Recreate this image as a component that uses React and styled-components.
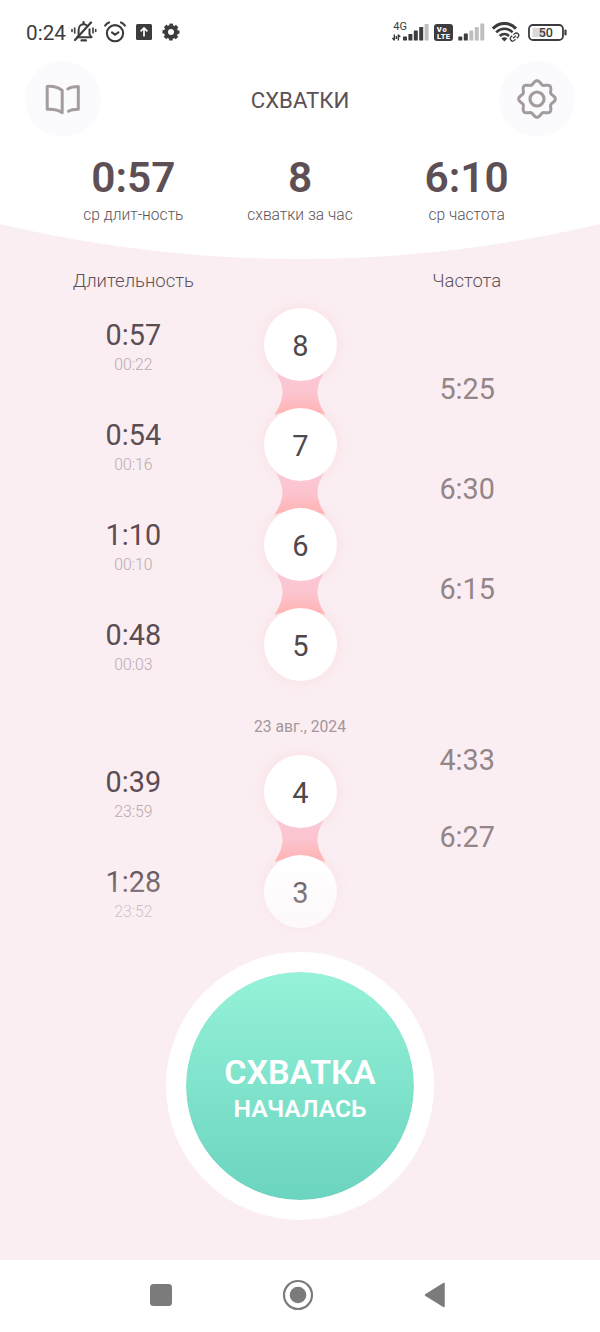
import React from "react";
import styled, { createGlobalStyle } from "styled-components";

const GlobalStyle = createGlobalStyle`
  * { box-sizing: border-box; }
  body { margin: 0; background: #fff; font-family: Roboto, "Noto Sans", sans-serif; }
`;

const Screen = styled.div`
  width: 600px;
  height: 1332px;
  display: flex;
  flex-direction: column;
  overflow: hidden;
  background: #faeef2;
`;

const Top = styled.header`
  height: 259px;
  flex: none;
  background: radial-gradient(circle at 50% -1044px, #fff 1302.5px, transparent 1303.5px);
`;

const StatusBar = styled.div`
  height: 60px;
  padding: 4px 33px 0 26px;
  display: flex;
  align-items: center;
  justify-content: space-between;
  color: #3c3c3e;
`;

const StatusGroup = styled.div`
  display: flex;
  align-items: center;
  svg { display: block; flex: none; }
`;

const Clock = styled.span`
  width: 45px;
  font-size: 20.7px;
  line-height: 24px;
  padding-top: 2px;
`;

const Spacer = styled.span`
  width: ${(p) => p.$w}px;
`;

const TitleBar = styled.div`
  height: 77px;
  padding: 0 25px;
  display: flex;
  align-items: center;
  justify-content: space-between;
`;

const RoundButton = styled.button`
  width: 76px;
  height: 76px;
  padding: 0;
  border: 0;
  border-radius: 50%;
  background: #fbfbfd;
  display: flex;
  align-items: center;
  justify-content: center;
`;

const Title = styled.h1`
  margin: 3px 0 0;
  font-size: 22.2px;
  font-weight: 400;
  color: #5d5054;
`;

const Columns = styled.div`
  display: grid;
  grid-template-columns: repeat(3, 1fr);
  padding: 0 50px;
  text-align: center;
`;

const Stats = styled(Columns)`
  padding-top: 16px;
`;

const StatValue = styled.div`
  font-size: 42.4px;
  font-weight: 600;
  line-height: 50px;
  color: #5d4f54;
`;

const StatLabel = styled.div`
  margin-top: 2px;
  font-size: 15.6px;
  font-weight: 300;
  line-height: 20px;
  color: #5c5457;
`;

const Main = styled.main`
  position: relative;
  height: 1001px;
  flex: none;
`;

const Headings = styled(Columns)`
  height: 35px;
  padding-top: 9px;
  font-size: 18.5px;
  font-weight: 300;
  line-height: 27px;
  color: #5d5256;
`;

const Durations = styled.div`
  display: flex;
  flex-direction: column;
`;

const DurationItem = styled.div`
  height: 100px;
  padding-top: 24px;
`;

const Duration = styled.div`
  font-size: 28.8px;
  line-height: 34px;
  color: #5b4d52;
`;

const StartTime = styled.div`
  margin-top: 3px;
  font-size: 15.8px;
  font-weight: 300;
  line-height: 20px;
  color: #b9abb0;
`;

const Beads = styled.div`
  display: flex;
  flex-direction: column;
  align-items: center;
  padding: 13.5px 0 0 1px;
`;

const Bead = styled.div`
  position: relative;
  width: 73px;
  height: 73px;
  flex: none;
  border-radius: 50%;
  box-shadow: 0 0 13px 1px rgba(253, 214, 214, 0.6);
`;

const BeadFace = styled.div`
  position: relative;
  z-index: 2;
  height: 100%;
  border-radius: 50%;
  background: #fff;
  font-size: 29px;
  line-height: 76px;
  color: #4f494b;
`;

const Link = styled.svg`
  display: block;
  flex: none;
  margin: -7.5px 0 -8.5px;
  position: relative;
  z-index: 1;
`;

const Intervals = styled.div`
  padding: ${(p) => p.$offset}px 0 0 1px;
  display: flex;
  flex-direction: column;
  gap: ${(p) => p.$gap}px;
  font-size: 28.8px;
  line-height: 37px;
  color: #948589;
`;

const DateLabel = styled.div`
  height: 47px;
  padding-top: 23px;
  text-align: center;
  font-size: 15.7px;
  line-height: 20px;
  color: #a59699;
`;

const ActionArea = styled.div`
  position: absolute;
  z-index: 3;
  left: 0;
  right: 0;
  top: 600px;
  bottom: 0;
  padding-top: 93px;
  display: flex;
  justify-content: center;
  align-items: flex-start;
  background: linear-gradient(rgba(251, 240, 244, 0) 5px, rgba(251, 240, 244, 0.28) 35px, rgba(251, 240, 244, 0.36) 68px, #faeef2 150px);
`;

const StartButton = styled.button`
  width: 268px;
  height: 268px;
  padding: 4px 0 0;
  border: 20px solid #fff;
  border-radius: 50%;
  background: linear-gradient(#95f2d8, #6bd4bf) padding-box;
  color: #fff;
  font-family: inherit;
  display: flex;
  flex-direction: column;
  align-items: center;
  justify-content: center;
`;

const ActionName = styled.span`
  font-size: 34px;
  font-weight: 600;
  line-height: 40px;
`;

const ActionState = styled.span`
  font-size: 24.7px;
  font-weight: 600;
  line-height: 33px;
`;

const NavBar = styled.nav`
  flex: 1;
  padding: 0 154px 2px 149px;
  background: #fff;
  display: flex;
  align-items: center;
  justify-content: space-between;
`;

const BellOffIcon = () => (
  <svg width="26" height="22" viewBox="0 0 26 22" fill="none" stroke="currentColor" strokeWidth="2" strokeLinecap="round">
    <path d="M6 16.2h14.5M7.6 15V9.2C7.6 5.8 9.6 3.2 12.6 3.2c1.6 0 2.6.5 3.5 1.5M18.5 8.2v5.3l2 2.5" />
    <path d="M12.6 1.2v1.5M10.5 19.4h4.5" strokeWidth="2.2" />
    <path d="M4 19 20 1.5" strokeWidth="2.2" />
    <path d="M3.7 7v5M1 8.5v2M22 7v5M24.7 8.5v2" strokeWidth="1.6" />
  </svg>
);

const AlarmIcon = () => (
  <svg width="22" height="22" viewBox="0 0 22 22" fill="none" stroke="currentColor" strokeWidth="2.1" strokeLinecap="round">
    <circle cx="11" cy="12.2" r="8.1" />
    <path d="m8 11.4 3 2.4 3.4-2.4" />
    <path d="M1.2 4.6c.8-1.5 2-2.6 3.8-3.2M20.8 4.6c-.8-1.5-2-2.6-3.8-3.2" />
  </svg>
);

const UploadIcon = () => (
  <svg width="16" height="16" viewBox="0 0 16 16">
    <rect width="16" height="16" rx="1.5" fill="currentColor" />
    <path d="M8 12.4V4.2M4.6 7.4 8 4l3.4 3.4" fill="none" stroke="#fff" strokeWidth="1.7" />
  </svg>
);

const CogIcon = () => (
  <svg width="18" height="18" viewBox="0 0 18 18" fill="none" stroke="currentColor">
    <circle cx="9" cy="9" r="5" strokeWidth="4" />
    <circle cx="9" cy="9" r="7.2" strokeWidth="2.6" strokeDasharray="3.5 2.155" strokeDashoffset="1.75" />
  </svg>
);

const Bars = ({ active }) => (
  <svg width="27" height="18" viewBox="0 0 27 18" fill="currentColor">
    {[4, 7, 10, 13.5, 17].map((h, i) => (
      <rect key={h} x={0.3 + i * 5.5} y={17.5 - h} width="4" height={h} rx=".6" opacity={i < active ? 1 : 0.33} />
    ))}
  </svg>
);

const MobileSignalIcon = () => (
  <svg width="37" height="22" viewBox="0 0 37 22" fill="currentColor">
    <text x="1.3" y="8.8" fontSize="11" fontFamily="Roboto, sans-serif">4G</text>
    <path d="M2.3 13.5v6M6.3 19.5v-6M.4 17l1.9 2.3M8.2 16l-1.9-2.3M4.3 15v3" fill="none" stroke="currentColor" strokeWidth="1.4" />
    {[4, 6.5, 10, 13.5, 16.5].map((h, i) => (
      <rect key={h} x={11 + i * 5.4} y={19.5 - h} width="4" height={h} rx=".6" opacity={i < 4 ? 1 : 0.33} />
    ))}
  </svg>
);

const VolteIcon = () => (
  <svg width="19" height="17" viewBox="0 0 19 17" fontFamily="Roboto, sans-serif" fontWeight="900">
    <rect width="19" height="17" rx="3" fill="currentColor" />
    <text x="2.8" y="7.6" fontSize="7.5" fill="#fff" textLength="10">Vo</text>
    <text x="3" y="14.6" fontSize="7.5" fill="#fff" textLength="13">LTE</text>
  </svg>
);

const WifiIcon = () => (
  <svg width="28" height="20" viewBox="0 0 28 20" fill="none" stroke="currentColor">
    <path d="M.8 6.6C7.5-.3 17.3-.3 24 6.6" strokeWidth="3" />
    <path d="M4.2 10.3c4.7-4.7 11.8-4.7 16.4 0" strokeWidth="2.6" />
    <path d="M7.8 14c2.6-2.6 6.6-2.6 9.2 0" strokeWidth="2.6" />
    <path d="m9.4 16.4 3 3 3-3c-1.8-1.7-4.2-1.7-6 0z" fill="currentColor" stroke="none" />
    <g transform="rotate(-42 22.5 15)" strokeWidth="1.3">
      <path d="M21.7 12.6h-1.6a2.4 2.4 0 0 0 0 4.8h1.6M23.3 12.6h1.6a2.4 2.4 0 0 1 0 4.8h-1.6M20.5 15h4" />
    </g>
  </svg>
);

const BatteryIcon = () => (
  <svg width="39" height="17" viewBox="0 0 39 17">
    <rect x="1" y="1" width="34" height="15" rx="4" fill="none" stroke="currentColor" strokeWidth="1.8" />
    <rect x="4.5" y="4" width="13" height="9" rx="1" fill="#d9d9d9" />
    <rect x="36.4" y="5.5" width="2.2" height="6" rx="1" fill="currentColor" />
    <text x="17.8" y="13" fontSize="12.5" fontWeight="500" textAnchor="middle" fill="currentColor" fontFamily="Roboto, sans-serif">50</text>
  </svg>
);

const BookIcon = () => (
  <svg width="36" height="32" viewBox="0 0 36 32" fill="none" stroke="#a59c9e" strokeWidth="3" strokeLinecap="round" strokeLinejoin="round">
    <path d="M2.2 3.4C8 3 13.2 4.2 17.2 7.5v22.2C13 26.6 8 26 2.2 26.3z" />
    <path d="M22.8 6c2.7-1.8 6.2-2.6 10.5-2.6v22.9c-3.9 0-7 .3-9.8 2" />
  </svg>
);

const gearOutline = Array.from({ length: 145 }, (_, i) => {
  const a = (i / 144) * Math.PI * 2;
  const r = 16.6 + 1.7 * Math.cos(8 * a);
  return `${i ? "L" : "M"}${(21 + r * Math.sin(a)).toFixed(2)} ${(21 - r * Math.cos(a)).toFixed(2)}`;
}).join("");

const SettingsIcon = () => (
  <svg width="42" height="42" viewBox="0 0 42 42" fill="none" stroke="#a39b9d" strokeWidth="3" strokeLinejoin="round">
    <path d={`${gearOutline}Z`} />
    <circle cx="21" cy="21" r="7" strokeWidth="3.2" />
  </svg>
);

const BeadLink = () => (
  <Link width="52" height="43" viewBox="0 0 52 43">
    <defs>
      <linearGradient id="linkFill" x1="0" y1="0" x2="0" y2="1">
        <stop offset="0" stopColor="#f9c9d7" />
        <stop offset=".5" stopColor="#fcc3cd" />
        <stop offset="1" stopColor="#ffb1b0" />
      </linearGradient>
    </defs>
    <path d="M2 0C6 6 8.5 13 8.5 19 8.5 27 5 35 .5 42Q26 32 51.5 42C47 35 43.5 27 43.5 19 43.5 13 46 6 50 0Q26 13 2 0z" fill="url(#linkFill)" />
  </Link>
);

const stats = [
  ["0:57", "ср длит-ность"],
  ["8", "схватки за час"],
  ["6:10", "ср частота"],
];

const today = [
  [8, "0:57", "00:22"],
  [7, "0:54", "00:16"],
  [6, "1:10", "00:10"],
  [5, "0:48", "00:03"],
];

const yesterday = [
  [4, "0:39", "23:59"],
  [3, "1:28", "23:52"],
];

const DayGroup = ({ rows, intervals, offset, gap }) => (
  <Columns>
    <Durations>
      {rows.map(([n, duration, time]) => (
        <DurationItem key={n}>
          <Duration>{duration}</Duration>
          <StartTime>{time}</StartTime>
        </DurationItem>
      ))}
    </Durations>
    <Beads>
      {rows.map(([n], i) => (
        <React.Fragment key={n}>
          {i > 0 && <BeadLink />}
          <Bead><BeadFace>{n}</BeadFace></Bead>
        </React.Fragment>
      ))}
    </Beads>
    <Intervals $offset={offset} $gap={gap}>
      {intervals.map((t) => <div key={t}>{t}</div>)}
    </Intervals>
  </Columns>
);

export default function App() {
  return (
    <Screen>
      <GlobalStyle />
      <Top>
        <StatusBar>
          <StatusGroup>
            <Clock>0:24</Clock>
            <BellOffIcon />
            <Spacer $w={7} />
            <AlarmIcon />
            <Spacer $w={10} />
            <UploadIcon />
            <Spacer $w={10} />
            <CogIcon />
          </StatusGroup>
          <StatusGroup>
            <MobileSignalIcon />
            <Spacer $w={5} />
            <VolteIcon />
            <Spacer $w={5} />
            <Bars active={2} />
            <Spacer $w={7} />
            <WifiIcon />
            <Spacer $w={8} />
            <BatteryIcon />
          </StatusGroup>
        </StatusBar>
        <TitleBar>
          <RoundButton aria-label="Журнал"><BookIcon /></RoundButton>
          <Title>СХВАТКИ</Title>
          <RoundButton aria-label="Настройки"><SettingsIcon /></RoundButton>
        </TitleBar>
        <Stats>
          {stats.map(([value, label]) => (
            <div key={label}>
              <StatValue>{value}</StatValue>
              <StatLabel>{label}</StatLabel>
            </div>
          ))}
        </Stats>
      </Top>
      <Main>
        <Headings>
          <span>Длительность</span>
          <span />
          <span>Частота</span>
        </Headings>
        <DayGroup rows={today} intervals={["5:25", "6:30", "6:15"]} offset={77} gap={63} />
        <DateLabel>23 авг., 2024</DateLabel>
        <DayGroup rows={yesterday} intervals={["4:33", "6:27"]} offset={1} gap={40} />
        <ActionArea>
          <StartButton>
            <ActionName>СХВАТКА</ActionName>
            <ActionState>НАЧАЛАСЬ</ActionState>
          </StartButton>
        </ActionArea>
      </Main>
      <NavBar>
        <svg width="24" height="24" viewBox="0 0 24 24"><rect x="1" y="1" width="22" height="22" rx="3.5" fill="#7b7b7b" /></svg>
        <svg width="32" height="32" viewBox="0 0 32 32">
          <circle cx="15" cy="16" r="14" fill="none" stroke="#7b7b7b" strokeWidth="2.2" />
          <circle cx="15" cy="16" r="8.3" fill="#7b7b7b" />
        </svg>
        <svg width="22" height="26" viewBox="0 0 22 26"><path d="M20 1.5v23L1.5 13z" fill="#7b7b7b" stroke="#7b7b7b" strokeWidth="1.5" strokeLinejoin="round" /></svg>
      </NavBar>
    </Screen>
  );
}
